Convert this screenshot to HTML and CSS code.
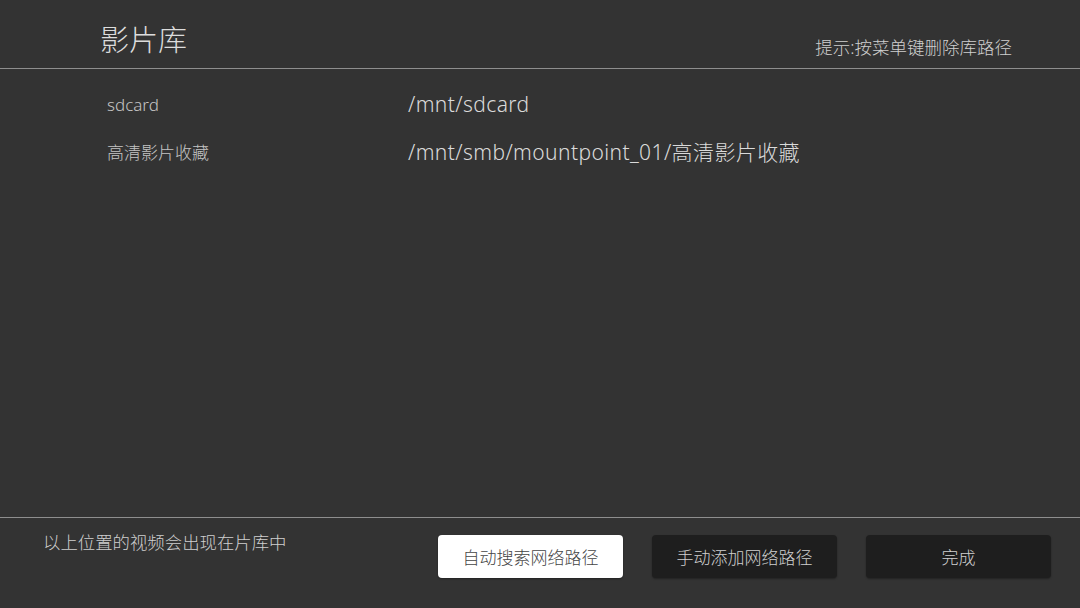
FILE: index.html
```html
<!DOCTYPE html>
<html lang="zh-CN">
<head>
<meta charset="utf-8">
<title>影片库</title>
<link rel="stylesheet" href="styles.css">
</head>
<body>
<div class="screen">
  <header class="header">
    <h1 class="title">影片库</h1>
    <div class="hint">提示:按菜单键删除库路径</div>
  </header>
  <main class="list">
    <div class="row">
      <div class="label">sdcard</div>
      <div class="path">/mnt/sdcard</div>
    </div>
    <div class="row">
      <div class="label">高清影片收藏</div>
      <div class="path">/mnt/smb/mountpoint_01/高清影片收藏</div>
    </div>
  </main>
  <footer class="footer">
    <div class="note">以上位置的视频会出现在片库中</div>
    <div class="buttons">
      <button class="btn btn-focus">自动搜索网络路径</button>
      <button class="btn">手动添加网络路径</button>
      <button class="btn">完成</button>
    </div>
  </footer>
</div>
</body>
</html>
```

FILE: styles.css
```css
* { box-sizing: border-box; }
html, body {
  margin: 0;
  padding: 0;
  background: #333333;
}
body {
  font-family: "Noto Sans", "Noto Sans CJK SC", sans-serif;
  font-weight: 300;
  color: #d8d8d8;
}
.screen {
  width: 1080px;
  height: 608px;
  display: flex;
  flex-direction: column;
  background: #333333;
}
.header {
  height: 69px;
  flex: none;
  display: flex;
  align-items: flex-start;
  justify-content: space-between;
  padding: 0 68px 0 100px;
  border-bottom: 1px solid #8e8e8e;
}
.title {
  margin: 0;
  padding-top: 20px;
  font-size: 29px;
  font-weight: 300;
  line-height: 40px;
  color: #dcdcdc;
}
.hint {
  padding-top: 35px;
  font-size: 17.5px;
  line-height: 24px;
  color: #cfcfcf;
}
.list {
  flex: 1;
  display: flex;
  flex-direction: column;
  gap: 19px;
  padding: 21px 0 0 107px;
}
.row {
  display: flex;
  align-items: center;
  height: 28px;
}
.label {
  width: 301px;
  font-size: 17px;
  color: #c4c4c4;
}
.path {
  font-size: 21px;
  color: #dadada;
  letter-spacing: 0.4px;
}
.footer {
  height: 91px;
  flex: none;
  border-top: 1px solid #8e8e8e;
  display: flex;
  justify-content: space-between;
  padding: 0 29px 0 43px;
}
.note {
  padding-top: 12px;
  font-size: 17.4px;
  line-height: 24px;
  color: #cfcfcf;
}
.buttons {
  display: flex;
  gap: 29px;
  padding-top: 17px;
}
.btn {
  width: 185px;
  height: 43px;
  border: none;
  border-radius: 4px;
  background: #1e1e1e;
  color: #cfcfcf;
  font-family: "Noto Sans", "Noto Sans CJK SC", sans-serif;
  font-weight: 300;
  font-size: 17px;
  padding: 0;
  box-shadow: 0 1px 2px rgba(0,0,0,0.35);
}
.btn-focus {
  background: #ffffff;
  color: #444444;
}
```
